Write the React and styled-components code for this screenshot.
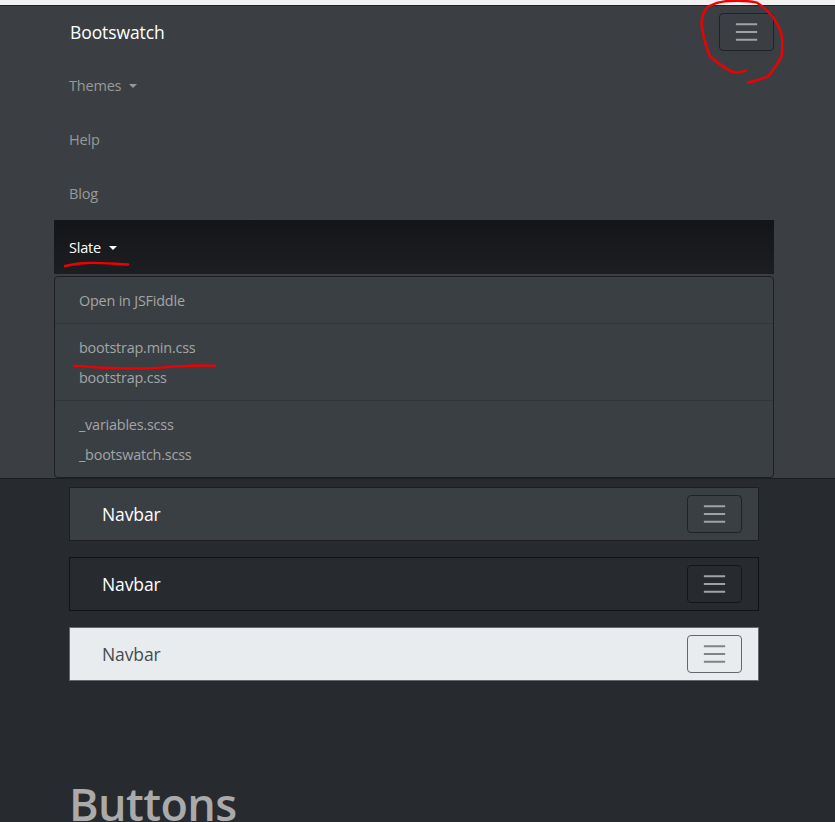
import styled, { createGlobalStyle } from "styled-components";

const GlobalStyle = createGlobalStyle`
	html, body {
		margin: 0;
		padding: 0;
		background: #272b30;
	}
	body {
		font-family: "Open Sans", "Noto Sans", "Liberation Sans", sans-serif;
		font-size: 14px;
		color: #aaa;
	}
`;

const Page = styled.div`
	position: relative;
	height: 822px;
	overflow: hidden;
	background: #272b30;
`;

const ScreenEdge = styled.div`
	height: 5px;
	background: #f1f1f1;
`;

const TopBar = styled.header`
	height: 474px;
	box-sizing: border-box;
	background: #3b3f44;
	border-top: 1px solid #1f2226;
	border-bottom: 1px solid #1c1e22;
`;

const Container = styled.div`
	width: 720px;
	margin-left: 54px;
`;

const BrandRow = styled.div`
	height: 52px;
	display: flex;
	align-items: center;
	justify-content: space-between;
	padding-left: 16px;
`;

const Brand = styled.a`
	font-size: 17.5px;
	letter-spacing: -0.1px;
	color: #fff;
`;

const NavItem = styled.div`
	height: 54px;
	display: flex;
	align-items: center;
	gap: 8px;
	padding-left: 15px;
	box-sizing: border-box;
	font-size: 14.5px;
	letter-spacing: -0.2px;
	color: ${(p) => (p.$active ? "#fff" : "#999")};
	background: ${(p) =>
		p.$active ? "linear-gradient(#131518, #1c1e21)" : "transparent"};
`;

const Caret = styled.span`
	width: 0;
	height: 0;
	margin-top: 1px;
	border-top: 4.5px solid ${(p) => (p.$active ? "#fff" : "#999")};
	border-left: 4.5px solid transparent;
	border-right: 4.5px solid transparent;
`;

const Menu = styled.div`
	margin-top: 2px;
	padding: 8px 0;
	height: 202px;
	box-sizing: border-box;
	background: #3a3f44;
	border: 1px solid #1c1e22;
	border-radius: 4px;
`;

const MenuItem = styled.div`
	height: 30px;
	display: flex;
	align-items: center;
	padding-left: 24px;
	font-size: 14.4px;
	letter-spacing: -0.2px;
	color: #a3a5a7;
`;

const MenuDivider = styled.div`
	height: 1px;
	margin: 8px 0;
	background: #32363b;
`;

const TOGGLER_COLORS = {
	primary: { border: "#1f2226", icon: "#a0a2a5" },
	dark: { border: "#131518", icon: "#a0a2a5" },
	light: { border: "#64686d", icon: "#808285" },
};

const Toggler = styled.button`
	width: 55px;
	height: 38px;
	padding: 3px 12px;
	box-sizing: border-box;
	display: flex;
	background: transparent;
	border: 1px solid ${(p) => TOGGLER_COLORS[p.$variant].border};
	border-radius: 4px;
	color: ${(p) => TOGGLER_COLORS[p.$variant].icon};
`;

const Section = styled.section`
	padding: 8px 15px 0;
	display: flex;
	flex-direction: column;
	gap: 16px;
`;

const NAVBAR_COLORS = {
	primary: { bg: "#3a3f44", border: "#1c1e22", text: "#fff" },
	dark: { bg: "#272b30", border: "#121316", text: "#fff" },
	light: { bg: "#e9ecef", border: "#64686d", text: "#464a4e" },
};

const DemoNavbar = styled.nav`
	height: 54px;
	box-sizing: border-box;
	display: flex;
	align-items: center;
	justify-content: space-between;
	padding: 0 16px 0 32px;
	background: ${(p) => NAVBAR_COLORS[p.$variant].bg};
	border: 1px solid ${(p) => NAVBAR_COLORS[p.$variant].border};
	color: ${(p) => NAVBAR_COLORS[p.$variant].text};
	font-size: 17.5px;
	letter-spacing: -0.1px;
`;

const Heading = styled.h1`
	margin: 95px 0 0;
	padding-left: 15px;
	font-size: 45px;
	line-height: 55px;
	font-weight: 600;
	letter-spacing: -0.6px;
	color: #aaa;
`;

const Scribbles = styled.svg`
	position: absolute;
	top: 0;
	left: 0;
	pointer-events: none;
`;

function TogglerIcon() {
	return (
		<svg width="30" height="30" viewBox="0 0 30 30" fill="none">
			<path d="M4 7h22M4 15h22M4 23h22" stroke="currentColor" strokeWidth="2" />
		</svg>
	);
}

function Navbar({ variant }) {
	return (
		<DemoNavbar $variant={variant}>
			<span>Navbar</span>
			<Toggler $variant={variant}>
				<TogglerIcon />
			</Toggler>
		</DemoNavbar>
	);
}

function App() {
	return (
		<Page>
			<GlobalStyle />
			<ScreenEdge />
			<TopBar>
				<Container>
					<BrandRow>
						<Brand>Bootswatch</Brand>
						<Toggler $variant="primary">
							<TogglerIcon />
						</Toggler>
					</BrandRow>
					<NavItem>
						Themes <Caret />
					</NavItem>
					<NavItem>Help</NavItem>
					<NavItem>Blog</NavItem>
					<NavItem $active>
						Slate <Caret $active />
					</NavItem>
					<Menu>
						<MenuItem>Open in JSFiddle</MenuItem>
						<MenuDivider />
						<MenuItem>bootstrap.min.css</MenuItem>
						<MenuItem>bootstrap.css</MenuItem>
						<MenuDivider />
						<MenuItem>_variables.scss</MenuItem>
						<MenuItem>_bootswatch.scss</MenuItem>
					</Menu>
				</Container>
			</TopBar>
			<Container>
				<Section>
					<Navbar variant="primary" />
					<Navbar variant="dark" />
					<Navbar variant="light" />
				</Section>
				<Heading>Buttons</Heading>
			</Container>
			<Scribbles width="835" height="822" fill="none" stroke="#f00000" strokeWidth="2.4" strokeLinecap="round" strokeLinejoin="round">
				<path d="M746 70.5C741 72.5 736 73 731 71.5C724 67 716 62 710 56.5C706 47 703 35 701.5 24C702 16 704 10 708 6.5C715 3 722 1 730 1C740 0.5 750 1 757 2.7C764 7 769 12 773 17C778 25 781 30 782 37C782.5 44 782.5 50 781.5 57C777 64 773 71 768 76.5C762 79 755 81 748 82.5" />
				<path d="M65 266C72 264.5 80 263 87 263C100 262.5 115 264 128 264.5" />
				<path d="M74.5 365.7C84 366.5 94 367.5 103 367.7C118 368.5 135 368.5 150 368.3C164 367.5 178 366 190 365.7C198 365.2 207 365.5 215 365.7" />
			</Scribbles>
		</Page>
	);
}

export default App;
